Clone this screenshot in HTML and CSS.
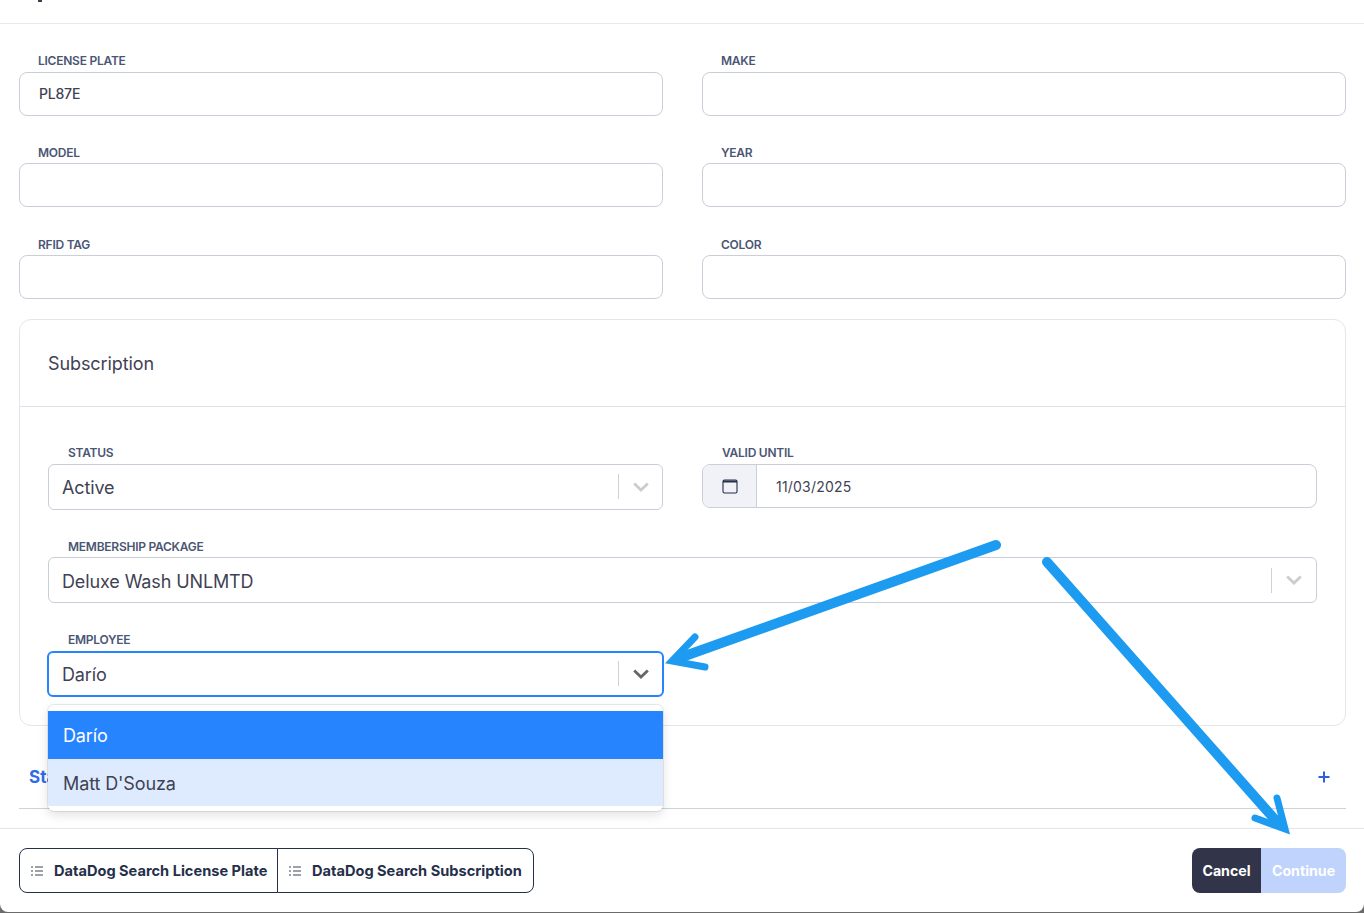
FILE: index.html
```html
<!DOCTYPE html>
<html lang="en">
<head>
<meta charset="utf-8">
<title>Vehicle</title>
<link rel="stylesheet" href="styles.css">
</head>
<body>
<div class="modal">
  <header class="modal-head"><span class="title-tail"></span></header>
  <main class="modal-body">
    <div class="grid">
      <div class="field"><label class="label">License Plate</label><div class="input">PL87E</div></div>
      <div class="field"><label class="label">Make</label><div class="input"></div></div>
      <div class="field"><label class="label">Model</label><div class="input"></div></div>
      <div class="field"><label class="label">Year</label><div class="input"></div></div>
      <div class="field"><label class="label">RFID Tag</label><div class="input"></div></div>
      <div class="field"><label class="label">Color</label><div class="input"></div></div>
    </div>
    <section class="card">
      <h2 class="card-head">Subscription</h2>
      <div class="card-body">
        <div class="field"><label class="label">Status</label>
          <div class="select"><span class="select-value">Active</span><span class="sep"></span>
            <svg class="chev" viewBox="0 0 20 20"><path d="M3.200 6.600 10 13l6.800-6.400"/></svg></div>
        </div>
        <div class="field"><label class="label">Valid Until</label>
          <div class="date">
            <span class="date-addon">
              <svg class="cal" viewBox="0 0 16 16"><rect x="1" y="2" width="14" height="13" rx="1.500"/><path class="cal-top" d="M1 3.500h14"/></svg>
            </span>
            <span class="date-value">11/03/2025</span>
          </div>
        </div>
        <div class="field wide"><label class="label">Membership Package</label>
          <div class="select"><span class="select-value">Deluxe Wash UNLMTD</span><span class="sep"></span>
            <svg class="chev" viewBox="0 0 20 20"><path d="M3.200 6.600 10 13l6.800-6.400"/></svg></div>
        </div>
        <div class="field employee"><label class="label">Employee</label>
          <div class="select focused"><span class="select-value">Darío</span><span class="sep"></span>
            <svg class="chev" viewBox="0 0 20 20"><path d="M3.200 6.600 10 13l6.800-6.400"/></svg></div>
          <ul class="menu">
            <li class="opt selected">Darío</li>
            <li class="opt active">Matt D'Souza</li>
          </ul>
        </div>
      </div>
    </section>
    <div class="accordion">
      <span class="acc-title">Sta</span>
      <svg class="plus" viewBox="0 0 12 12"><path d="M6 .500v11M.500 6h11"/></svg>
    </div>
  </main>
  <footer class="modal-foot">
    <div class="group">
      <button class="btn-outline"><svg class="list" viewBox="0 0 12 10"><path d="M0 1h2M0 5h2M0 9h2M4 1h8M4 5h8M4 9h8"/></svg>DataDog Search License Plate</button>
      <button class="btn-outline"><svg class="list" viewBox="0 0 12 10"><path d="M0 1h2M0 5h2M0 9h2M4 1h8M4 5h8M4 9h8"/></svg>DataDog Search Subscription</button>
    </div>
    <div class="actions">
      <button class="btn-cancel">Cancel</button>
      <button class="btn-continue">Continue</button>
    </div>
  </footer>
</div>
<svg class="annot" viewBox="0 0 1364 913">
  <path class="shaft" d="M996 545 682 657"/>
  <path class="head" d="M695 637 672 661 705 667"/>
  <path class="shaft" d="M1047 562 1278 823"/>
  <path class="head" d="M1277 798 1285 829 1255 818"/>
</svg>
</body>
</html>
```
FILE: styles.css
```css
* { box-sizing: border-box; }
html, body { margin: 0; height: 913px; overflow: hidden; }
body {
  background: #6b6b6b;
  font-family: Inter, "Noto Sans", "Liberation Sans", sans-serif;
  color: #252f4a;
  position: relative;
}
.modal {
  background: #fff;
  height: 912px;
  border-radius: 0 0 8px 8px;
  display: flex;
  flex-direction: column;
}
.modal-head {
  height: 24px;
  border-bottom: 1px solid #e8e9ee;
  flex: none;
}
.title-tail {
  display: block;
  width: 4px;
  height: 2px;
  margin-left: 38px;
  background: #3a3f52;
}
.modal-body {
  flex: 1;
  padding: 29.4px 18px 0 19px;
}
.grid {
  display: grid;
  grid-template-columns: 644px 644px;
  column-gap: 39px;
  row-gap: 29.4px;
}
.label {
  display: block;
  height: 15px;
  margin: 0 0 3.2px 19px;
  font-size: 12px;
  line-height: 15px;
  font-weight: 600;
  text-transform: uppercase;
  color: #4b5675;
  letter-spacing: -0.25px;
}
.input {
  height: 44px;
  border: 1px solid #c9ced8;
  border-radius: 8px;
  padding: 0 19px;
  font-size: 14px;
  line-height: 42px;
  font-weight: 500;
  letter-spacing: -0.2px;
  color: #3f4254;
}
.card {
  margin-top: 20px;
  height: 407.4px;
  border: 1px solid #e4e6ec;
  border-radius: 12px;
}
.card-head {
  margin: 0;
  height: 87px;
  padding-left: 28px;
  font-size: 18px;
  line-height: 87px;
  font-weight: 400;
  letter-spacing: -0.1px;
  color: #3f4254;
  border-bottom: 1px solid #dfe1e7;
}
.card-body {
  display: grid;
  grid-template-columns: 615px 615px;
  column-gap: 39px;
  row-gap: 29.4px;
  padding: 38.6px 28px 0;
  align-items: start;
}
.card-body .label { margin-left: 20px; }
.wide { grid-column: 1 / -1; }
.employee { position: relative; }
.select {
  height: 46px;
  display: flex;
  align-items: center;
  border: 1px solid #c9ced8;
  border-radius: 6px;
  padding-left: 13px;
  background: #fff;
}
.select-value {
  flex: 1;
  padding-top: 2px;
  font-size: 18px;
  letter-spacing: -0.12px;
  color: #3f4254;
}
.sep {
  width: 1px;
  height: 25px;
  background: #d0d0d0;
}
.chev {
  width: 20px;
  height: 20px;
  margin: 0 11px 0 12px;
  fill: none;
  stroke: #cccccc;
  stroke-width: 2.800;
}
.wide .chev { margin-right: 12px; }
.focused {
  margin: 0 -1px;
  border: 2px solid #2684ff;
}
.focused .chev { stroke: #666666; }
.date {
  height: 44px;
  display: flex;
  align-items: stretch;
  border: 1px solid #c9ced8;
  border-radius: 8px;
  overflow: hidden;
}
.date-addon {
  width: 54px;
  flex: none;
  display: flex;
  align-items: center;
  justify-content: center;
  background: #f0f2f7;
  border-right: 1px solid #c9ced8;
}
.cal {
  width: 16px;
  height: 16px;
  fill: none;
  stroke: #252f4a;
  stroke-width: 1.100;
}
.cal-top { stroke-width: 1.800; }
.date-value {
  padding-left: 19px;
  font-size: 14px;
  line-height: 43px;
  letter-spacing: 0.2px;
  color: #3f4254;
}
.menu {
  position: absolute;
  left: 0;
  right: 0;
  top: 72.4px;
  z-index: 2;
  margin: 0;
  padding: 6px 0 5px;
  list-style: none;
  background: #fff;
  border-radius: 6px;
  box-shadow: 0 0 0 1px rgba(0, 0, 0, .08), 0 4px 11px rgba(0, 0, 0, .12);
}
.opt {
  padding-left: 15px;
  font-size: 18px;
  line-height: 50px;
  letter-spacing: -0.12px;
  color: #3f4254;
}
.selected { height: 48px; background: #2684ff; color: #fff; }
.active { height: 47px; background: #deebff; }
.accordion {
  height: 83px;
  display: flex;
  align-items: center;
  justify-content: space-between;
  padding: 20px 16px 0 10px;
  border-bottom: 1px solid #cfd2d9;
}
.acc-title {
  font-size: 17px;
  font-weight: 700;
  color: #2f6be8;
}
.plus {
  width: 12px;
  height: 12px;
  fill: none;
  stroke: #2f5fe0;
  stroke-width: 2;
}
.modal-foot {
  flex: none;
  height: 84px;
  border-top: 1px solid #e4e6ec;
  padding: 19px 18px 0 19px;
  display: flex;
  justify-content: space-between;
  align-items: flex-start;
}
.group { display: flex; }
.btn-outline {
  height: 45px;
  display: flex;
  align-items: center;
  gap: 11px;
  padding: 0 6px 0 11px;
  background: #fff;
  border: 1px solid #252f4a;
  font: 700 14.6px Inter, "Liberation Sans", sans-serif;
  color: #252f4a;
  white-space: nowrap;
}
.btn-outline:first-child { width: 259px; border-radius: 8px 0 0 8px; }
.btn-outline:last-child { width: 257px; margin-left: -1px; border-radius: 0 8px 8px 0; }
.list {
  width: 12px;
  height: 10px;
  flex: none;
  fill: none;
  stroke: #3f4254;
  stroke-width: 1;
}
.actions { display: flex; }
.btn-cancel, .btn-continue {
  height: 45px;
  border: 0;
  font: 700 14.2px Inter, "Liberation Sans", sans-serif;
  color: #fff;
  padding: 0;
}
.btn-cancel { width: 69px; background: #323549; border-radius: 8px 0 0 8px; }
.btn-continue { width: 85px; background: #c0d3fd; border-radius: 0 8px 8px 0; }
.annot {
  position: absolute;
  left: 0;
  top: 0;
  width: 1364px;
  height: 913px;
  z-index: 5;
  fill: none;
  stroke: #1c9bf0;
  stroke-linecap: round;
  pointer-events: none;
}
.shaft { stroke-width: 10; }
.head { stroke-width: 7; stroke-linejoin: miter; stroke-miterlimit: 8; }
```
